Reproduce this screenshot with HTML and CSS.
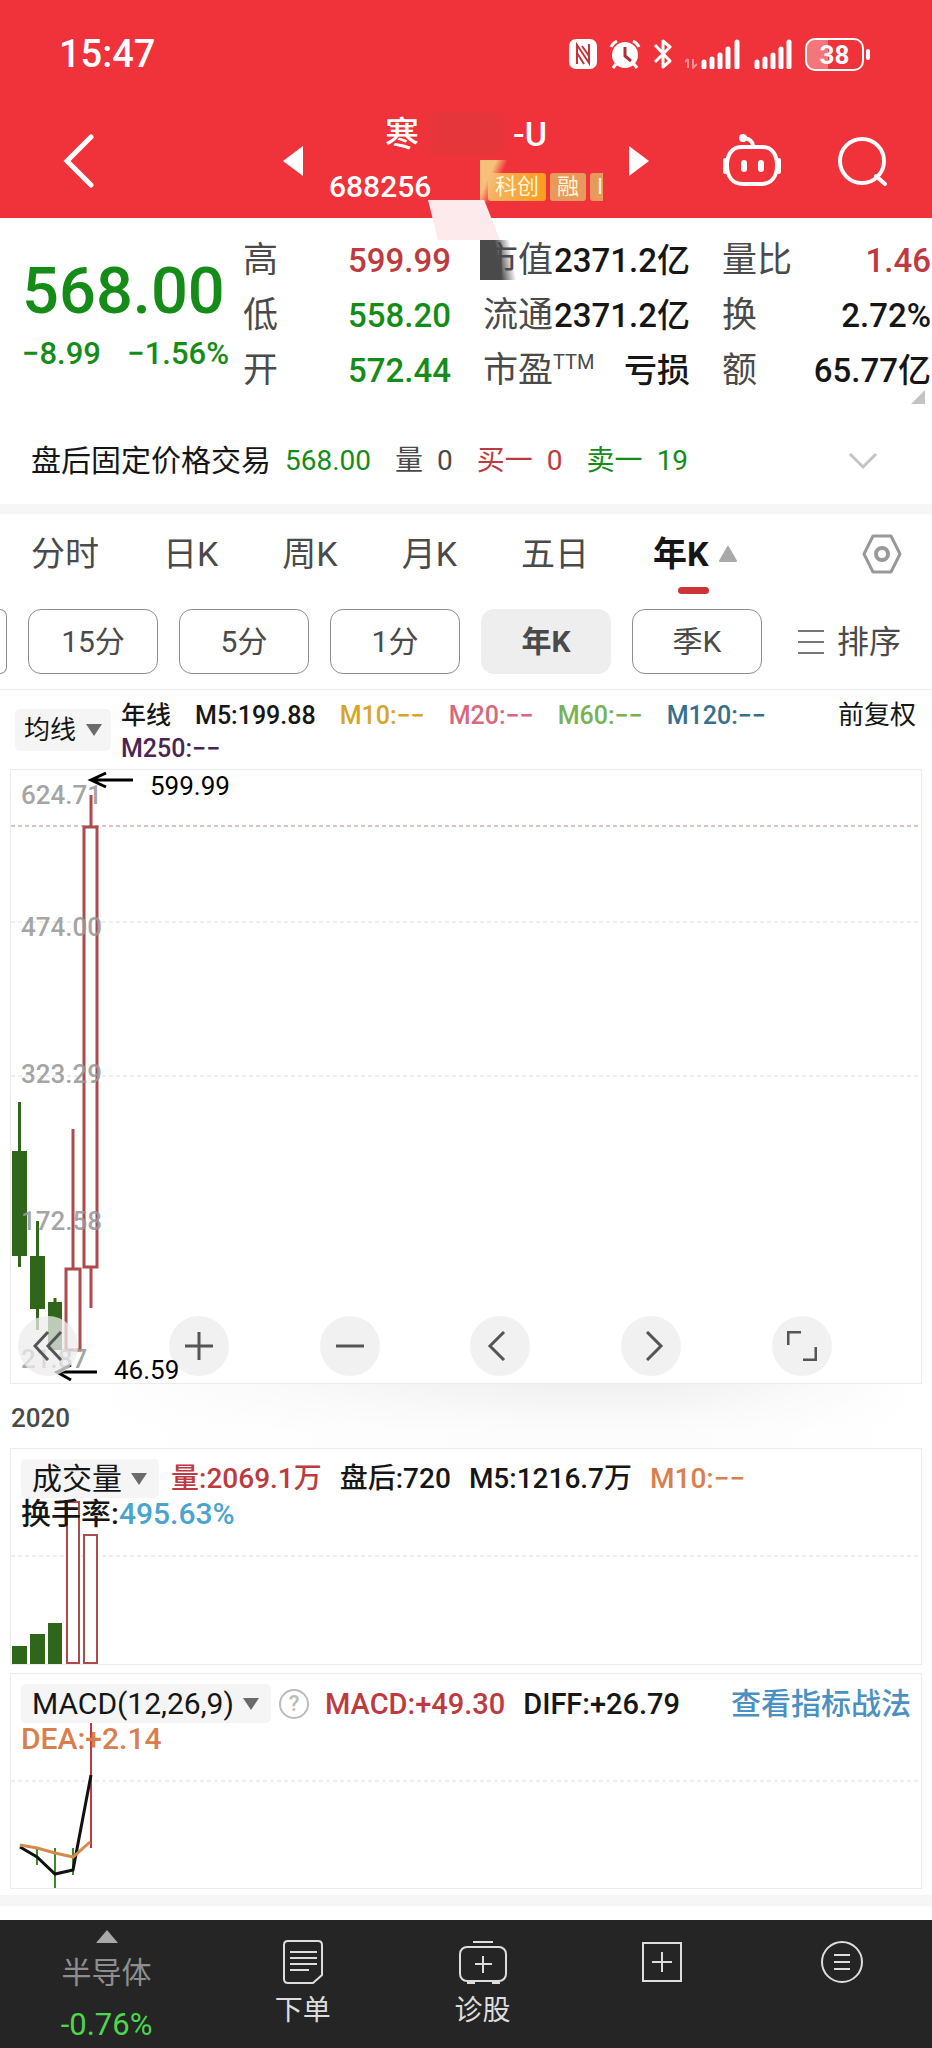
FILE: index.html
```html
<!DOCTYPE html>
<html lang="zh-CN">
<head>
    <meta charset="UTF-8">
    <meta name="viewport" content="width=device-width, initial-scale=1.0">
    <title>688256</title>
    <link rel="stylesheet" href="styles.css">
</head>
<body>
    <header class="top">
        <div class="status-bar">
            <span class="clock">15:47</span>
            <div class="status-icons">
                <svg width="28" height="30" viewBox="0 0 28 30"><rect x="0" y="0" width="28" height="30" rx="7" fill="#fff"/><path d="M8 25V6l12 18V5M13 7l7 10M8 14l7 11" fill="none" stroke="#c5343b" stroke-width="2"/></svg>
                <svg width="32" height="30" viewBox="0 0 32 30"><circle cx="16" cy="16" r="13" fill="#fff"/><path d="M2 8a12 12 0 0 1 6-6M30 8a12 12 0 0 0-6-6M7 25l-3 4M25 25l3 4" fill="none" stroke="#fff" stroke-width="3"/><path d="M16 8v9l6 5" fill="none" stroke="#a8343a" stroke-width="3"/></svg>
                <svg width="20" height="30" viewBox="0 0 20 30"><path d="M2 6l15 16-7 6V2l7 6L2 23" fill="none" stroke="#fff" stroke-width="3" stroke-linejoin="round"/></svg>
                <svg width="56" height="30" viewBox="0 0 56 30"><path d="M3 20v9M0 23l3-3M8 20v9l4-4" fill="none" stroke="#f78f93" stroke-width="2"/><path d="M19 23v5M27 20v8M35 16v12M43 10v18M52 3v25" stroke="#fff" stroke-width="5" stroke-linecap="round"/></svg>
                <svg width="40" height="30" viewBox="0 0 40 30"><path d="M4 23v5M12 20v8M20 16v12M28 10v18M36 3v25" stroke="#fff" stroke-width="5" stroke-linecap="round"/></svg>
                <span class="battery">38</span>
            </div>
        </div>
        <div class="app-bar">
            <button class="icon-btn back" aria-label="返回">
                <svg width="32" height="54" viewBox="0 0 32 54"><path d="M28 3L4 27l24 24" fill="none" stroke="#fff" stroke-width="5" stroke-linecap="round"/></svg>
            </button>
            <div class="stock">
                <button class="icon-btn" aria-label="上一只">
                    <svg width="20" height="30" viewBox="0 0 20 30"><path d="M20 0v30L0 15z" fill="#fff"/></svg>
                </button>
                <div class="stock-id">
                    <div class="stock-name"><span>寒</span><i class="smudge"></i><span>-U</span></div>
                    <div class="stock-code">
                        <span>688256</span>
                        <span class="badges"><b class="badge badge-star">科创</b><b class="badge">融</b><b class="badge badge-cut">I</b></span>
                    </div>
                </div>
                <button class="icon-btn" aria-label="下一只">
                    <svg width="20" height="30" viewBox="0 0 20 30"><path d="M0 0v30l20-15z" fill="#fff"/></svg>
                </button>
            </div>
            <div class="app-actions">
                <button class="icon-btn" aria-label="智能助手">
                    <svg width="58" height="54" viewBox="0 0 58 54" fill="none" stroke="#fff" stroke-width="4"><path d="M18 13h22c9 0 14 8 14 18 0 12-6 19-16 19H20C10 50 4 43 4 31c0-10 5-18 14-18z"/><path d="M30 12c0-5-3-7-9-8"/><circle cx="20" cy="4" r="3" fill="#fff" stroke-width="2"/><path d="M2 26v12M56 26v12" stroke-linecap="round"/><path d="M21 29v6M38 29v6" stroke-width="6" stroke-linecap="round"/></svg>
                </button>
                <button class="icon-btn" aria-label="搜索">
                    <svg width="52" height="52" viewBox="0 0 52 52" fill="none" stroke="#fff" stroke-width="4"><circle cx="25" cy="26" r="22"/><path d="M39 41l9 8" stroke-linecap="round"/></svg>
                </button>
            </div>
        </div>
        <i class="patch patch-gold"></i>
        <i class="patch patch-pink"></i>
        <i class="patch patch-dark"></i>
    </header>

    <main>
        <section class="quote">
            <div class="quote-grid">
                <div class="price down">
                    <div class="price-last">568.00</div>
                    <div class="price-change"><span>−8.99</span><span>−1.56%</span></div>
                </div>
                <dl class="stats">
                    <div><dt>高</dt><dd class="up">599.99</dd></div>
                    <div><dt>低</dt><dd class="down">558.20</dd></div>
                    <div><dt>开</dt><dd class="down">572.44</dd></div>
                </dl>
                <dl class="stats">
                    <div><dt>市值</dt><dd>2371.2亿</dd></div>
                    <div><dt>流通</dt><dd>2371.2亿</dd></div>
                    <div><dt>市盈<sup>TTM</sup></dt><dd>亏损</dd></div>
                </dl>
                <dl class="stats">
                    <div><dt>量比</dt><dd class="up">1.46</dd></div>
                    <div><dt>换</dt><dd>2.72%</dd></div>
                    <div><dt>额</dt><dd>65.77亿</dd></div>
                </dl>
            </div>
            <svg class="corner" width="14" height="14" viewBox="0 0 14 14"><path d="M14 0v14H0z" fill="#c4c4c4"/></svg>
            <div class="after-hours">
                <span class="after-title">盘后固定价格交易</span>
                <span class="down">568.00</span>
                <span class="muted"><span>量</span><span>0</span></span>
                <span class="up"><span>买一</span><span>0</span></span>
                <span class="down"><span>卖一</span><span>19</span></span>
                <button class="icon-btn expand" aria-label="展开">
                    <svg width="30" height="18" viewBox="0 0 30 18"><path d="M2 2l13 13L28 2" fill="none" stroke="#c4c4c4" stroke-width="3"/></svg>
                </button>
            </div>
        </section>

        <section class="periods">
            <nav class="tabs">
                <button class="tab">分时</button>
                <button class="tab">日K</button>
                <button class="tab">周K</button>
                <button class="tab">月K</button>
                <button class="tab">五日</button>
                <button class="tab active">年K<svg width="18" height="16" viewBox="0 0 18 16"><path d="M9 1l8 14H1z" fill="#a9a9a9" stroke="#a9a9a9" stroke-width="2" stroke-linejoin="round"/></svg></button>
                <button class="icon-btn settings" aria-label="设置">
                    <svg width="40" height="40" viewBox="0 0 40 40" fill="none" stroke="#999" stroke-width="3" stroke-linejoin="round"><path d="M11 2h18l9 18-9 18H11L2 20z"/><circle cx="20" cy="20" r="6" stroke-width="4"/></svg>
                </button>
            </nav>
            <div class="chips">
                <i class="chip-edge"></i>
                <button class="chip">15分</button>
                <button class="chip">5分</button>
                <button class="chip">1分</button>
                <button class="chip active">年K</button>
                <button class="chip">季K</button>
                <button class="sort"><svg width="26" height="26" viewBox="0 0 26 26"><path d="M0 2h26M0 13h26M0 24h26" stroke="#777" stroke-width="2"/></svg>排序</button>
            </div>
        </section>

        <section class="ma-row">
            <label class="picker picker-ma">
                <select aria-label="主图指标"><option>均线</option></select>
                <svg width="16" height="12" viewBox="0 0 16 12"><path d="M0 0h16L8 12z" fill="#6b6b6b"/></svg>
            </label>
            <div class="ma-list">
                <span>年线</span>
                <span>M5:199.88</span>
                <span class="m10">M10:−−</span>
                <span class="m20">M20:−−</span>
                <span class="m60">M60:−−</span>
                <span class="m120">M120:−−</span>
                <span class="m250">M250:−−</span>
            </div>
            <button class="adjust">前复权</button>
        </section>

        <section class="panel">
            <svg class="plot" width="100%" height="613">
                <g class="grid">
                    <line class="limit" x1="0" y1="56" x2="100%" y2="56"/>
                    <line x1="0" y1="152" x2="100%" y2="152"/>
                    <line x1="0" y1="306" x2="100%" y2="306"/>
                </g>
                <g class="fall">
                    <rect x="1" y="381" width="15" height="105"/><path d="M8.500 332v165"/>
                    <rect x="19" y="486" width="15" height="53"/><path d="M26.500 451v109"/>
                    <rect x="37" y="532" width="14" height="48"/><path d="M44 528v10"/>
                </g>
                <g class="rise">
                    <rect x="55" y="499" width="14" height="81"/><path d="M62 359v140"/>
                    <rect x="73" y="57" width="13" height="440"/><path d="M80 25v32M80 497v41"/>
                </g>
                <g class="axis-text">
                    <text x="10" y="34">624.71</text>
                    <text x="10" y="166">474.00</text>
                    <text x="10" y="313">323.29</text>
                    <text x="10" y="460">172.58</text>
                    <text x="10" y="598">21.87</text>
                </g>
                <g class="marks">
                    <path d="M122 10H80M95 3L80 10l15 7"/>
                    <path d="M86 602H46M60 595l-14 7 14 8"/>
                </g>
            </svg>
            <div class="chart-tools">
                <button aria-label="最早"><svg width="30" height="30" viewBox="0 0 30 30"><path d="M15 1L2 15l13 14M28 1L15 15l13 14"/></svg></button>
                <button aria-label="放大"><svg width="30" height="30" viewBox="0 0 30 30"><path d="M1 15h28M15 1v28"/></svg></button>
                <button aria-label="缩小"><svg width="30" height="30" viewBox="0 0 30 30"><path d="M1 15h28"/></svg></button>
                <button aria-label="左移"><svg width="30" height="30" viewBox="0 0 30 30"><path d="M19 1L5 15l14 14"/></svg></button>
                <button aria-label="右移"><svg width="30" height="30" viewBox="0 0 30 30"><path d="M11 1l14 14-14 14"/></svg></button>
                <button aria-label="全屏"><svg width="30" height="30" viewBox="0 0 30 30"><path d="M1 14V1h13M29 16v13H16"/></svg></button>
            </div>
            <svg class="plot plot-labels" width="100%" height="613">
                <text x="139" y="25">599.99</text>
                <text x="103" y="609">46.59</text>
            </svg>
        </section>

        <div class="year">2020</div>

        <section class="panel">
            <svg class="plot" width="100%" height="215">
                <g class="grid"><line x1="0" y1="107" x2="100%" y2="107"/></g>
                <g class="fall">
                    <rect x="1" y="197" width="15" height="18"/>
                    <rect x="19" y="185" width="15" height="30"/>
                    <rect x="37" y="174" width="14" height="41"/>
                </g>
                <g class="rise thin">
                    <rect x="56" y="53" width="12" height="161"/>
                    <rect x="73" y="86" width="13" height="128"/>
                </g>
            </svg>
            <div class="legend">
                <label class="picker">
                    <select aria-label="副图指标一"><option>成交量</option></select>
                    <svg width="16" height="12" viewBox="0 0 16 12"><path d="M0 0h16L8 12z" fill="#6b6b6b"/></svg>
                </label>
                <span class="up">量:2069.1万</span>
                <span>盘后:720</span>
                <span>M5:1216.7万</span>
                <span class="orange">M10:−−</span>
                <div class="legend-second">换手率:<span class="cyan">495.63%</span></div>
            </div>
        </section>

        <section class="panel panel-macd">
            <svg class="plot" width="100%" height="214">
                <g class="grid"><line x1="0" y1="107" x2="100%" y2="107"/></g>
                <path d="M26 175v16M44 174v40M62 174v27" stroke="#3b8a2c" stroke-width="2"/>
                <path d="M80 42v132" stroke="#c8373d" stroke-width="2"/>
                <polyline class="diff" points="9,173 26,183 44,200 62,196 80,101"/>
                <polyline class="dea" points="9,171 26,174 44,179 62,183 79,168"/>
            </svg>
            <div class="legend legend-macd">
                <label class="picker">
                    <select aria-label="副图指标二"><option>MACD(12,26,9)</option></select>
                    <svg width="16" height="12" viewBox="0 0 16 12"><path d="M0 0h16L8 12z" fill="#6b6b6b"/></svg>
                </label>
                <button class="help" aria-label="指标说明">?</button>
                <span class="up">MACD:+49.30</span>
                <span>DIFF:+26.79</span>
                <a class="guide" href="#">查看指标战法</a>
                <div class="legend-second orange">DEA:+2.14</div>
            </div>
        </section>
    </main>

    <nav class="bottom-nav">
        <a class="sector" href="#">
            <svg width="22" height="13" viewBox="0 0 22 13"><path d="M11 0l11 13H0z" fill="#a8a8a8"/></svg>
            <span>半导体</span>
            <span class="sector-change">-0.76%</span>
        </a>
        <a href="#">
            <svg width="42" height="46" viewBox="0 0 42 46"><path d="M6 2h30q4 0 4 4v30l-9 8H6q-4 0-4-4V6q0-4 4-4zM8 13h27M8 19h27M8 25h27M8 31h19"/></svg>
            <span>下单</span>
        </a>
        <a href="#">
            <svg width="50" height="46" viewBox="0 0 50 46"><rect x="2" y="8" width="46" height="34" rx="7"/><path d="M15 3h20M25 17v17M17 25h17M9 44h8M34 44h8"/></svg>
            <span>诊股</span>
        </a>
        <a href="#" aria-label="加自选">
            <svg width="42" height="46" viewBox="0 0 42 46"><rect x="2" y="4" width="38" height="38"/><path d="M21 13v20M11 23h20"/></svg>
        </a>
        <a class="more" href="#" aria-label="更多">
            <svg width="44" height="46" viewBox="0 0 44 46"><circle cx="22" cy="23" r="20"/><path d="M14 16h16M14 23h16M14 30h16"/></svg>
        </a>
    </nav>
</body>
</html>
```
FILE: styles.css
```css
:root {
    --red: #f0323a;
    --up: #bd3b40;
    --down: #148c17;
    --candle-green: #30661a;
    --candle-red: #ad4a4c;
    --text: #161616;
    --label: #4a4a4a;
    --line: #ececec;
    --band: #f6f6f6;
}
* {
    box-sizing: border-box;
}
body {
    margin: 0;
    background: #fff;
    color: var(--text);
    font-family: Roboto, "Noto Sans CJK SC", sans-serif;
    font-size: 28px;
    line-height: 34px;
}
button, select {
    padding: 0;
    border: none;
    background: none;
    color: inherit;
    font: inherit;
    cursor: pointer;
}
a {
    color: inherit;
    text-decoration: none;
}
svg {
    display: block;
    flex: none;
}
dl, dd {
    margin: 0;
}
.up { color: var(--up); }
.down { color: var(--down); }
.orange { color: #d97f4e; }
.cyan { color: #4ba3cf; }
.muted { color: var(--label); }

/* header */
.top {
    position: relative;
    height: 218px;
    background: var(--red);
    color: #fff;
}
.status-bar {
    display: flex;
    align-items: center;
    justify-content: space-between;
    height: 108px;
    padding: 0 68px 0 59px;
}
.clock {
    font-size: 38px;
    font-weight: 500;
}
.status-icons {
    display: flex;
    align-items: center;
    gap: 12px;
}
.battery {
    position: relative;
    width: 59px;
    height: 33px;
    border: 2px solid #fff;
    border-radius: 10px;
    background: linear-gradient(90deg, #f4767b 38%, transparent 38%);
    font-size: 26px;
    font-weight: 700;
    line-height: 30px;
    text-align: center;
}
.battery::after {
    content: "";
    position: absolute;
    right: -8px;
    top: 9px;
    width: 4px;
    height: 11px;
    border-radius: 2px;
    background: #fff;
}
.app-bar {
    display: grid;
    grid-template-columns: 1fr auto 1fr;
    align-items: center;
    height: 102px;
    padding: 0 43px;
}
.icon-btn {
    display: block;
}
.back {
    justify-self: start;
    margin-left: 20px;
}
.stock {
    display: flex;
    align-items: center;
    gap: 26px;
}
.stock-id {
    width: 274px;
}
.stock-name {
    display: flex;
    align-items: center;
    justify-content: center;
    height: 52px;
    font-size: 34px;
    font-weight: 500;
}
.smudge {
    width: 94px;
    height: 42px;
    background: linear-gradient(90deg, transparent, #e5363c 20%, #e5363c 80%, transparent);
}
.stock-code {
    display: flex;
    justify-content: space-between;
    align-items: center;
    height: 54px;
    font-size: 30px;
    font-weight: 500;
}
.badges {
    display: flex;
    gap: 4px;
}
.badge {
    padding: 0 7px;
    border-radius: 3px;
    background: #e89a5a;
    color: #fff3d6;
    font-size: 22px;
    font-weight: 400;
    line-height: 28px;
}
.badge-star {
    background: linear-gradient(90deg, #f3b568, #f99d1c);
}
.badge-cut {
    padding-right: 0;
    border-radius: 3px 0 0 3px;
}
.app-actions {
    display: flex;
    align-items: center;
    justify-content: flex-end;
    gap: 56px;
}
.patch {
    position: absolute;
}
.patch-gold {
    left: 480px;
    top: 160px;
    width: 28px;
    height: 42px;
    background: linear-gradient(115deg, #f7c078 35%, transparent 60%);
}
.patch-pink {
    left: 428px;
    top: 200px;
    width: 72px;
    height: 40px;
    background: #fdeaec;
    clip-path: polygon(0 0, 78% 0, 100% 100%, 14% 100%);
}
.patch-dark {
    left: 480px;
    top: 240px;
    width: 36px;
    height: 40px;
    background: linear-gradient(80deg, #4a4a4a 50%, transparent 85%);
    z-index: 1;
}

/* quote */
.quote {
    display: flow-root;
    height: 286px;
}
.quote-grid {
    display: grid;
    grid-template-columns: 221px 240px 239px 1fr;
    margin-top: 15px;
    padding: 0 1px 0 22px;
}
.price {
    padding-right: 14px;
    font-weight: 500;
    white-space: nowrap;
}
.price-last {
    margin-top: 20px;
    font-size: 65px;
    line-height: 76px;
}
.price-change {
    display: flex;
    justify-content: space-between;
    font-size: 31px;
    line-height: 50px;
}
.stats {
    padding-right: 32px;
}
.stats:last-child {
    padding-right: 0;
}
.stats div {
    display: flex;
    justify-content: space-between;
    font-size: 35px;
    line-height: 55px;
    white-space: nowrap;
}
.stats dt {
    color: var(--label);
}
.stats dd {
    font-size: 33px;
    font-weight: 500;
}
.stats sup {
    font-size: 20px;
    line-height: 20px;
}
.corner {
    margin: -8px 7px 0 auto;
}
.after-hours {
    display: flex;
    align-items: center;
    gap: 24px;
    margin-top: 40px;
    padding: 0 54px 0 31px;
}
.after-title {
    margin-right: -10px;
    font-size: 30px;
}
.after-hours span span + span {
    margin-left: 14px;
}
.expand {
    margin-left: auto;
}

/* period tabs */
.periods {
    border-top: 10px solid var(--band);
    border-bottom: 1px solid var(--line);
}
.tabs {
    display: flex;
    align-items: center;
    gap: 64px;
    height: 80px;
    padding: 0 30px 0 31px;
    color: var(--label);
    font-size: 34px;
}
.tab {
    position: relative;
    height: 80px;
}
.tab.active {
    display: flex;
    align-items: center;
    gap: 10px;
    color: var(--text);
    font-weight: 700;
}
.tab.active::after {
    content: "";
    position: absolute;
    left: 25px;
    bottom: 0;
    width: 31px;
    height: 7px;
    border-radius: 4px;
    background: #cc3437;
}
.settings {
    margin-left: auto;
}
.chips {
    display: flex;
    gap: 21px;
    padding: 15px 0;
    color: var(--label);
    font-size: 30px;
}
.chip {
    width: 130px;
    height: 65px;
    border: 1px solid #8f8f8f;
    border-radius: 13px;
}
.chip.active {
    border-color: #eee;
    background: #eee;
    font-weight: 700;
}
.chip-edge {
    width: 7px;
    border: 1px solid #8f8f8f;
    border-left: none;
    border-radius: 0 7px 7px 0;
}
.sort {
    display: flex;
    align-items: center;
    gap: 13px;
    margin-left: 15px;
    font-size: 32px;
}

/* indicator pickers */
.picker {
    display: flex;
    align-items: center;
    gap: 9px;
    height: 39px;
    padding: 0 12px 0 11px;
    border-radius: 5px;
    background: #f5f5f5;
    font-size: 30px;
}
.picker select {
    appearance: none;
    line-height: 39px;
}
.picker-ma {
    height: 42px;
    padding: 0 9px;
    font-size: 26px;
}
.ma-row {
    display: flex;
    align-items: flex-start;
    height: 79px;
    padding: 9px 16px 0 15px;
    font-size: 26px;
    line-height: 33px;
}
.ma-row .picker {
    margin-top: 10px;
}
.ma-list {
    display: flex;
    flex: 1;
    flex-wrap: wrap;
    column-gap: 24px;
    margin-left: 10px;
    font-size: 25px;
    font-weight: 500;
}
.m10 { color: #d5a52c; }
.m20 { color: #d9687e; }
.m60 { color: #77b255; }
.m120 { color: #37708f; }
.m250 { color: #4b2454; }

/* chart panels: plot and overlay share one grid cell */
.panel {
    display: grid;
    margin: 0 10px;
    border: 1px solid var(--line);
    background: #fff;
}
.panel > * {
    grid-area: 1 / 1;
}
.panel-macd {
    margin-top: 8px;
}
.plot {
    font-size: 26px;
}
.plot-labels {
    position: relative;
    overflow: visible;
    pointer-events: none;
}
.grid line {
    stroke: #dcdcdc;
    stroke-dasharray: 4 3;
}
.grid .limit {
    stroke: #b58b7e;
}
.fall {
    fill: var(--candle-green);
    stroke: none;
}
.fall path {
    stroke: var(--candle-green);
    stroke-width: 3;
}
.rise {
    fill: #fff;
    stroke: var(--candle-red);
    stroke-width: 3;
}
.rise.thin {
    stroke-width: 2;
}
.axis-text {
    fill: #999;
    fill-opacity: 0.9;
    font-weight: 500;
}
.marks path {
    fill: none;
    stroke: #000;
    stroke-width: 3;
}
.diff, .dea {
    fill: none;
    stroke: #111;
    stroke-width: 3;
}
.dea {
    stroke: #d58a4c;
}
.chart-tools {
    display: flex;
    justify-content: space-between;
    align-self: end;
    padding: 0 89px 7px 7px;
}
.chart-tools button {
    display: grid;
    place-items: center;
    width: 60px;
    height: 60px;
    border-radius: 50%;
    background: rgba(236, 236, 236, 0.75);
}
.chart-tools path {
    fill: none;
    stroke: #555;
    stroke-width: 3;
}
.year {
    height: 64px;
    padding: 0 11px;
    background: linear-gradient(90deg, #fff 10%, transparent 60%, transparent 70%, #fff 98%), linear-gradient(#f0f0f0, #fcfcfc 70%);
    color: var(--label);
    font-size: 26px;
    font-weight: 500;
    line-height: 68px;
}
.legend {
    display: flex;
    flex-wrap: wrap;
    align-content: flex-start;
    align-items: center;
    column-gap: 18px;
    padding: 10px 10px 0;
    font-weight: 500;
}
.legend-macd {
    font-size: 29px;
}
.legend .picker {
    margin-right: -6px;
    font-weight: 400;
}
.legend-second {
    width: 100%;
    font-size: 30px;
    line-height: 32px;
}
.help {
    width: 30px;
    height: 30px;
    margin: 0 -2px 0 -4px;
    border: 2px solid #bbb;
    border-radius: 50%;
    color: #bbb;
    font-size: 22px;
    line-height: 26px;
}
.guide {
    margin-left: auto;
    color: #4a90c2;
    font-size: 30px;
}

/* bottom bar */
main {
    padding-bottom: 14px;
}
main::after {
    content: "";
    display: block;
    height: 11px;
    margin-top: 6px;
    background: var(--band);
}
.bottom-nav {
    display: grid;
    grid-template-columns: 213px repeat(4, 1fr);
    height: 128px;
    background: #252525;
    color: #ddd;
}
.bottom-nav a {
    display: flex;
    flex-direction: column;
    align-items: center;
    gap: 9px;
    padding-top: 19px;
}
.bottom-nav a:not(.sector) svg {
    fill: none;
    stroke: #ddd;
    stroke-width: 2;
}
.bottom-nav .more svg {
    stroke: #a8a8a8;
    stroke-width: 3;
}
.bottom-nav .sector {
    gap: 13px;
    padding-top: 10px;
    color: #8e8e8e;
    font-size: 30px;
}
.sector-change {
    margin-top: 5px;
    color: #4bd84b;
    font-size: 31px;
}
```
